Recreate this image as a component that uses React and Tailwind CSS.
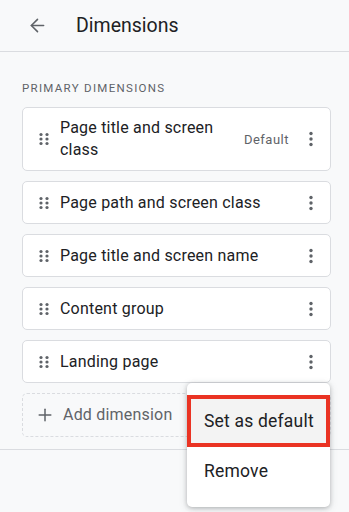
import { ArrowLeft, Plus } from 'lucide-react';

const font = { fontFamily: 'Roboto, "Noto Sans", Arial, sans-serif' };

const items = [
  { name: 'Page title and screen class', isDefault: true },
  { name: 'Page path and screen class' },
  { name: 'Page title and screen name' },
  { name: 'Content group' },
  { name: 'Landing page' },
];

const DragHandle = () => (
  <svg width="10" height="14" viewBox="0 0 10 14" className="shrink-0">
    {[2.5, 7, 11.5].map(y => (
      <g key={y} fill="#5f6368">
        <circle cx="2" cy={y} r="1.6" />
        <circle cx="8" cy={y} r="1.6" />
      </g>
    ))}
  </svg>
);

const Kebab = () => (
  <svg width="4" height="16" viewBox="0 0 4 16" className="shrink-0">
    <g fill="#5f6368">
      <circle cx="2" cy="2.5" r="1.7" />
      <circle cx="2" cy="8" r="1.7" />
      <circle cx="2" cy="13.5" r="1.7" />
    </g>
  </svg>
);

const DimensionRow = ({ name, isDefault }) => (
  <div className="flex items-center bg-white border border-[#dadce0] rounded-[5px] min-h-[43px] py-[9px] pl-[16px] pr-[17px]">
    <DragHandle />
    <div className="ml-[11px] flex-1 text-[16px] leading-[22px] text-[#202124] tracking-[0.2px] pr-2">
      {isDefault ? (
        <span className="block w-[160px]">{name}</span>
      ) : name}
    </div>
    {isDefault && (
      <span className="text-[13px] text-[#5f6368] tracking-[0.5px] mr-[20px]">Default</span>
    )}
    <Kebab />
  </div>
);

const App = () => {
  return (
    <div className="relative w-[349px] h-[512px] bg-[#f8f9fa] overflow-hidden" style={font}>
      <header className="h-[52px] flex items-center border-b border-[#dadce0]">
        <ArrowLeft className="ml-[27px] text-[#5f6368]" size={21} strokeWidth={1.8} />
        <h1 className="ml-[28px] text-[19.5px] text-[#202124]">Dimensions</h1>
      </header>

      <div className="border-b border-[#dadce0] pb-[12px]">
        <div className="pl-[22px] pr-[18px] pt-[28px]">
          <div className="text-[11.5px] tracking-[1.3px] text-[#5f6368] uppercase mb-[10px]">
            Primary dimensions
          </div>
          <div className="flex flex-col gap-[10px]">
            {items.map(item => (
              <DimensionRow key={item.name} {...item} />
            ))}
            <div className="flex items-center h-[44px] border border-dashed border-[#dadce0] rounded-[5px] pl-[12px]">
              <Plus size={20} strokeWidth={1.8} className="text-[#5f6368]" />
              <span className="ml-[8px] text-[16px] text-[#5f6368] tracking-[0.2px]">Add dimension</span>
            </div>
          </div>
        </div>
      </div>

      <div className="absolute left-[187px] top-[383px] w-[143px] h-[124px] bg-white rounded-[5px] shadow-[0_1px_4px_rgba(60,64,67,0.3),0_2px_8px_rgba(60,64,67,0.15)] pt-[12px]">
        <div className="h-[52px] bg-[#f3f3f3] border-[4px] border-[#ea3323] flex items-center pl-[13px] text-[17.5px] text-[#202124] tracking-[0.2px]">
          Set as default
        </div>
        <div className="h-[48px] flex items-center pl-[17px] text-[17.5px] text-[#202124] tracking-[0.2px]">
          Remove
        </div>
      </div>
    </div>
  );
};

export default App;
